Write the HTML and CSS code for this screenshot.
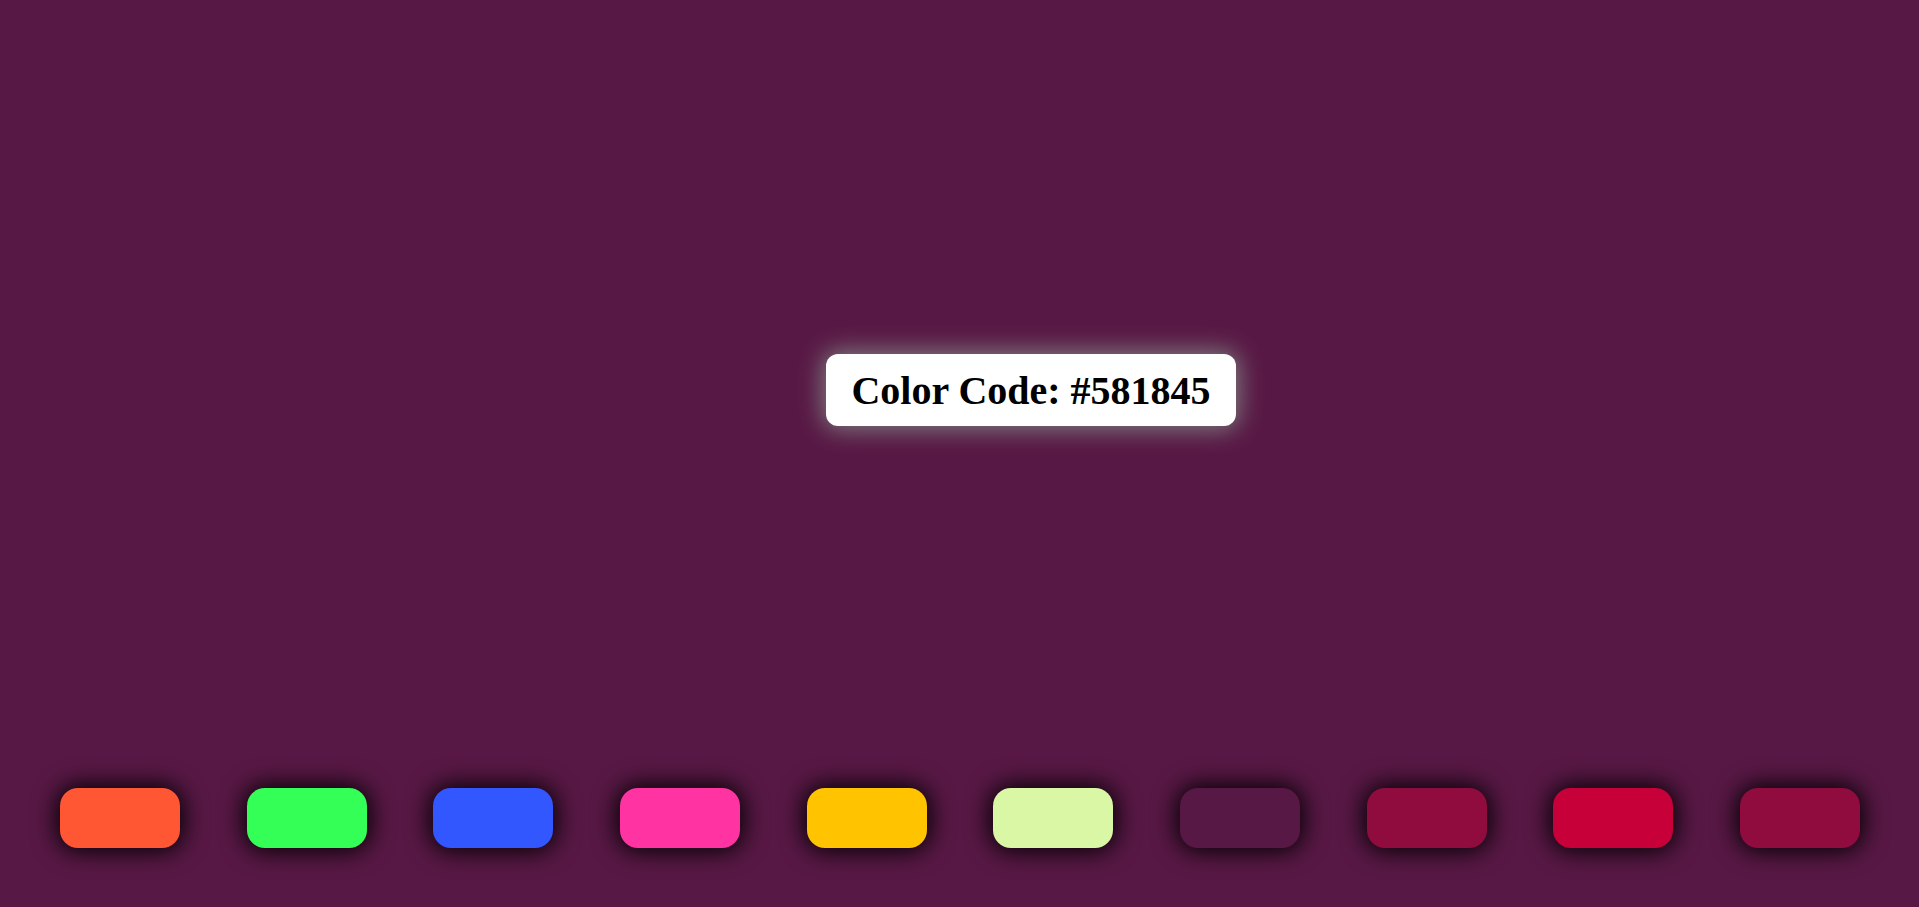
FILE: index.html
```html
<!DOCTYPE html>
<html lang="en">
<head>
  <meta charset="utf-8">
  <meta name="viewport" content="width=device-width, initial-scale=1">
  <title>Color Code</title>
  <link rel="stylesheet" href="styles.css">
</head>
<body>
  <main class="stage">
    <h1 class="code">Color Code: #581845</h1>
  </main>
  <div class="palette">
    <button type="button" class="swatch orange" aria-label="#FF5733"></button>
    <button type="button" class="swatch green" aria-label="#33FF57"></button>
    <button type="button" class="swatch blue" aria-label="#3357FF"></button>
    <button type="button" class="swatch pink" aria-label="#FF33A1"></button>
    <button type="button" class="swatch yellow" aria-label="#FFC300"></button>
    <button type="button" class="swatch lime" aria-label="#DAF7A6"></button>
    <button type="button" class="swatch plum" aria-label="#581845"></button>
    <button type="button" class="swatch wine" aria-label="#900C3F"></button>
    <button type="button" class="swatch red" aria-label="#C70039"></button>
    <button type="button" class="swatch wine" aria-label="#900C3F"></button>
  </div>
</body>
</html>
```
FILE: styles.css
```css
* {
  box-sizing: border-box;
  margin: 0;
  padding: 0;
}

body {
  min-height: 100vh;
  display: flex;
  flex-direction: column;
  background: #581845;
  font-family: "Liberation Serif", "Times New Roman", serif;
}

.stage {
  flex: 1;
  display: flex;
  justify-content: center;
  align-items: center;
  padding: 0 0 8px 143px;
}

.code {
  padding: 13px 25px 11px;
  border-radius: 12px;
  background: #fff;
  color: #000;
  font-size: 40px;
  line-height: 48px;
  box-shadow: 0 0 25px 3px #808080;
}

.palette {
  display: flex;
  justify-content: space-between;
  padding: 0 59px 59px 60px;
}

.swatch {
  width: 120px;
  height: 60px;
  border: 0;
  border-radius: 18px;
  box-shadow: 0 0 25px 3px #000;
  cursor: pointer;
}

.orange { background: #ff5733; }
.green { background: #33ff57; }
.blue { background: #3357ff; }
.pink { background: #ff33a1; }
.yellow { background: #ffc300; }
.lime { background: #daf7a6; }
.plum { background: #581845; }
.wine { background: #900c3f; }
.red { background: #c70039; }
```
